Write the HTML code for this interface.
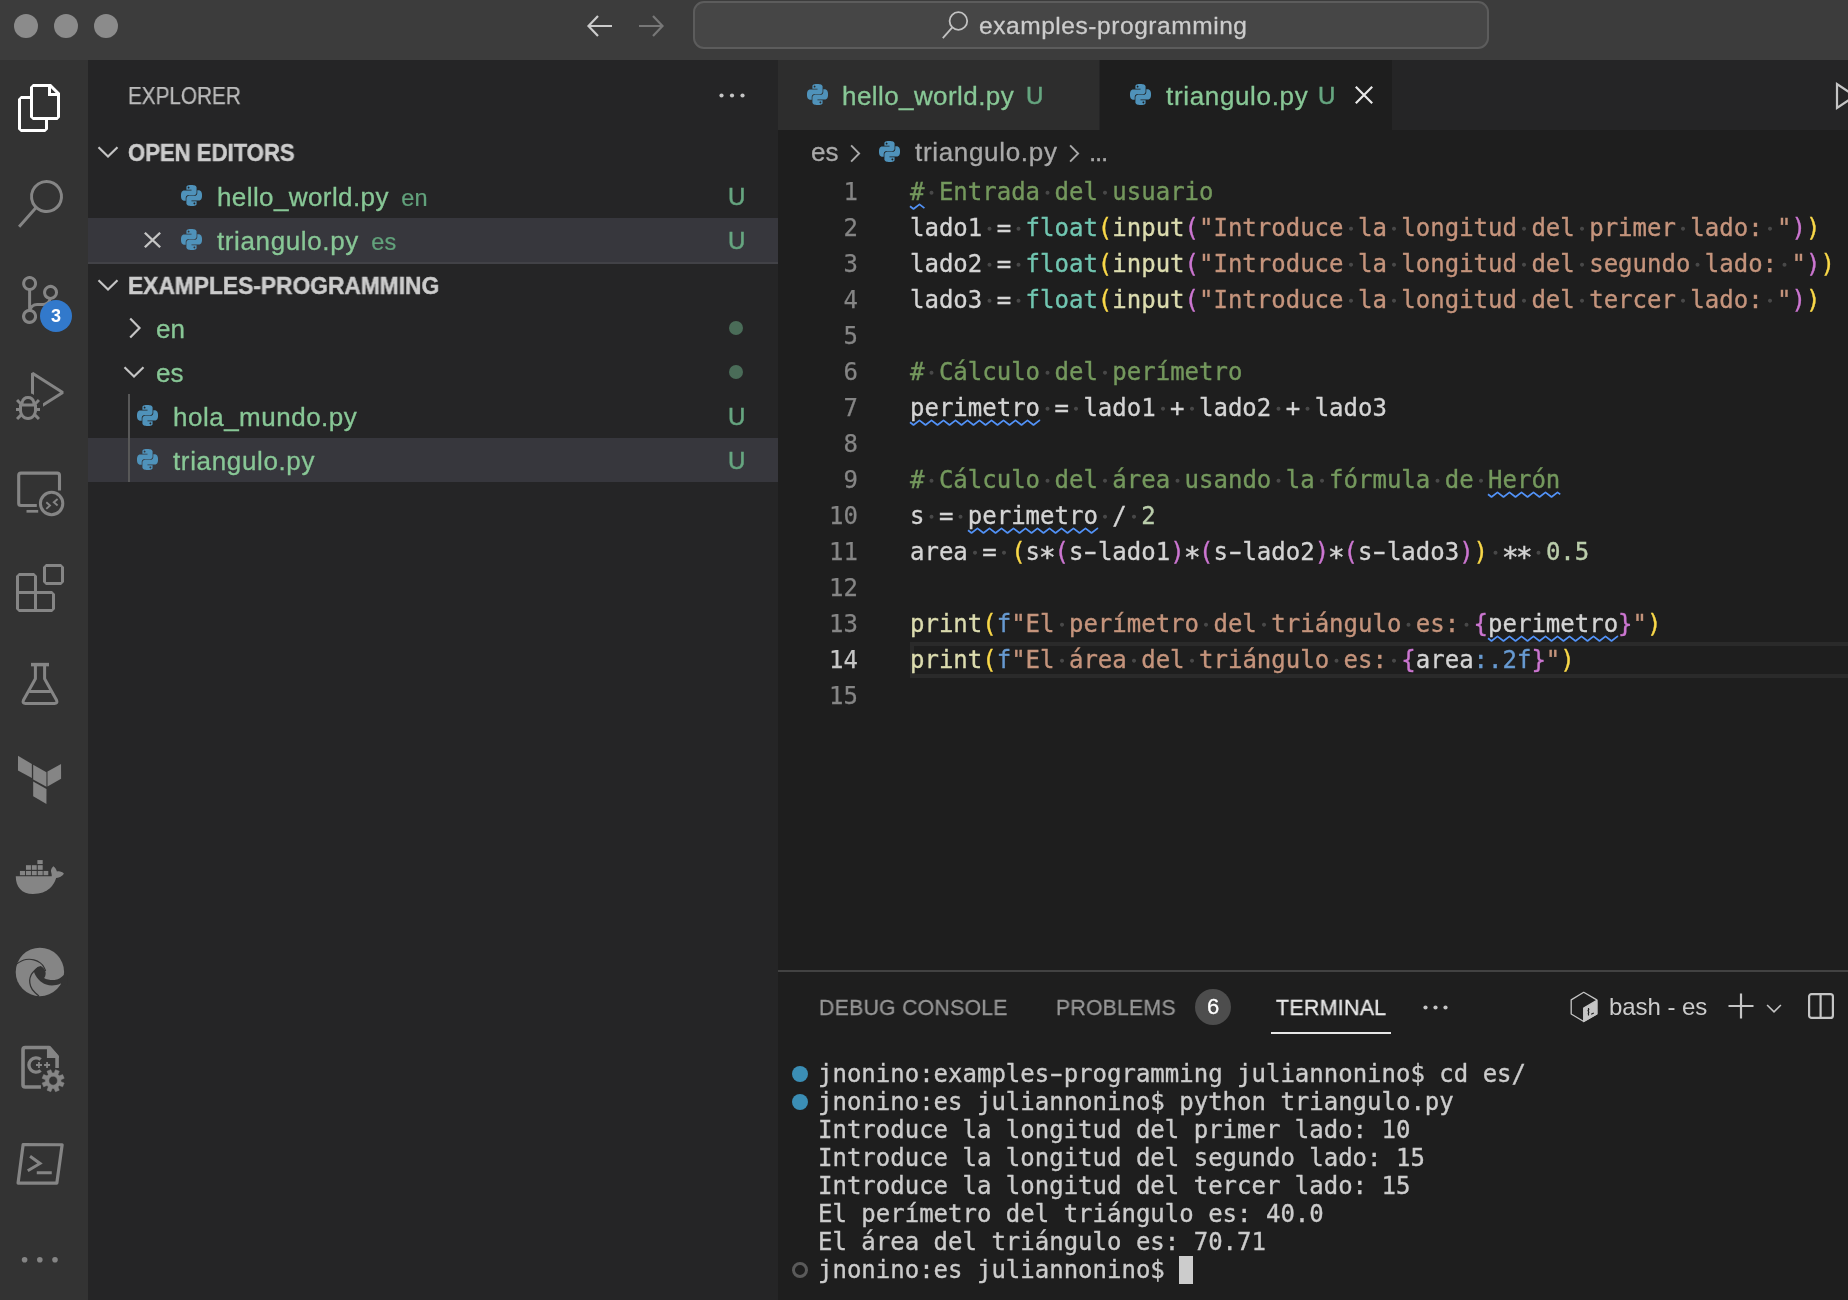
<!DOCTYPE html>
<html lang="es">
<head>
<meta charset="utf-8">
<title>triangulo.py — examples-programming</title>
<style>
*{box-sizing:border-box;margin:0;padding:0}
html,body{width:1848px;height:1300px;overflow:hidden;background:#1e1e1e}
body{position:relative;font-family:"Liberation Sans","DejaVu Sans",sans-serif;color:#cccccc;-webkit-font-smoothing:antialiased}
.abs{position:absolute}
svg{display:block;overflow:visible}
/* title bar */
#titlebar{position:absolute;left:0;top:0;width:1848px;height:60px;background:#3c3c3c}
.tl{position:absolute;top:14px;width:24px;height:24px;border-radius:50%;background:#8b8b8b}
#search{position:absolute;left:693px;top:1px;width:796px;height:48px;border:2px solid #5c5c5c;border-radius:11px;background:#464646}
#search span{position:absolute;left:285px;top:8px;font-size:24.5px;line-height:30px;color:#cccccc;letter-spacing:.35px;white-space:nowrap}
/* activity bar */
#activity{position:absolute;left:0;top:60px;width:88px;height:1240px;background:#333333}
/* sidebar */
#sidebar{position:absolute;left:88px;top:60px;width:690px;height:1240px;background:#252526}
.row{position:absolute;left:0;width:690px;height:44px;white-space:nowrap}
.row.sel{background:#37373d}
.row .lbl{position:absolute;top:7px;font-size:26px;line-height:32px;color:#88c796;letter-spacing:.1px}
.row .desc{font-size:22.5px;color:#62a27c;margin-left:12px;letter-spacing:0}
.row .u{position:absolute;left:640px;top:8px;font-size:24px;line-height:30px;color:#66a680;font-weight:400;-webkit-text-stroke:.5px #66a680}
.hdr{position:absolute;left:40px;font-size:22px;line-height:30px;font-weight:700;color:#cccccc;letter-spacing:.55px;white-space:nowrap}
.dot{position:absolute;left:641px;width:14px;height:14px;border-radius:50%;background:#4a6c58}
/* editor */
#tabs{position:absolute;left:778px;top:60px;width:1070px;height:70px;background:#252526}
.tab{position:absolute;top:0;height:70px;white-space:nowrap}
.tab .t{position:absolute;top:20px;font-size:26px;line-height:32px;color:#88c796;letter-spacing:.1px}
.tab .tu{position:absolute;top:21px;font-size:24px;line-height:30px;color:#66a680;-webkit-text-stroke:.5px #66a680}
#crumbs{position:absolute;left:778px;top:130px;width:1070px;height:44px;white-space:nowrap}
#crumbs span{position:absolute;top:6px;font-size:26px;line-height:32px;color:#a9a9a9}
#code{position:absolute;left:778px;top:174px;width:1070px;height:796px;font-family:"DejaVu Sans Mono","Liberation Mono",monospace;font-size:24px}
.ln{position:absolute;left:0;width:80px;height:36px;text-align:right;color:#858585;line-height:36px;font-size:24px}
.cl{position:absolute;left:132px;height:36px;line-height:36px;white-space:pre;color:#d4d4d4;font-size:24px}
.c{color:#74985d}.s{color:#c5947c}.f{color:#dcdcaf}.t{color:#71c6b1}.n{color:#bacdab}.k{color:#679ad1}.b1{color:#f9d849}.b2{color:#cc76d1}
.w{color:#4a4a4a}
.w{background:radial-gradient(circle at 50% 52.5%,#484848 0,#484848 1.5px,transparent 2.4px)}
.sq{background-repeat:repeat-x;background-position:left bottom;padding-bottom:0}
/* panel */
#panel{position:absolute;left:778px;top:970px;width:1070px;height:330px;border-top:2px solid #424242;background:#1e1e1e}
.pt{position:absolute;top:22px;-webkit-text-stroke:.3px;transform-origin:0 50%;font-size:22px;line-height:28px;color:#969696;letter-spacing:.3px;white-space:nowrap}
#term{position:absolute;left:40px;top:88px;font-family:"DejaVu Sans Mono","Liberation Mono",monospace;font-size:24px;line-height:28px;color:#cccccc;white-space:pre}
.td{position:absolute;left:14px;width:16px;height:16px;border-radius:50%;background:#3b8eb5}
/* grayscale AA: put text in own transparent layers */
.cl,.ln,#term,.lbl,.hdr,.u,.t,.tu,.pt,#crumbs span,#s_txt,#t_explorer,#p_bash{will-change:transform}
.cl,#term{-webkit-text-stroke:.35px}
.ln{-webkit-text-stroke:.25px}
.as{display:inline-block;transform:translateY(5.5px) scale(1.18)}
.hy{display:inline-block;transform:scaleX(1.6)}
.gl{display:block;will-change:transform}
.lbl,.tab .t{-webkit-text-stroke:.3px}
#crumbs span{-webkit-text-stroke:.3px}
.desc{-webkit-text-stroke:.2px}
#t_explorer{-webkit-text-stroke:.25px}
.hdr{-webkit-text-stroke:.45px}
/* fit */
#s_txt{letter-spacing:.56px !important;left:284px !important;-webkit-text-stroke:.3px}
#t_explorer{font-size:23px !important;letter-spacing:0 !important;transform-origin:0 50%;transform:scaleX(.9);top:22px !important;left:40px !important}
#h_open{font-size:23px;letter-spacing:0;transform-origin:0 50%;transform:scaleX(.961);margin-top:1px}
#h_ex{font-size:23px;letter-spacing:0;transform-origin:0 50%;transform:scaleX(.99);margin-top:1px}
#l_hello{letter-spacing:.4px;margin-left:1px}
#l_tri1{letter-spacing:.62px;margin-left:1px}
#l_hola{letter-spacing:.5px !important;margin-left:0.5px}
#l_tri2{letter-spacing:.64px !important;margin-left:1px}
#tab1t{letter-spacing:.42px}
#tab2t{letter-spacing:.66px;margin-left:.6px}
#c_tri{letter-spacing:.68px;margin-left:.6px}
#c_es{margin-left:.5px}
#p_debug{transform:scaleX(.964);margin-left:1px}
#p_prob{transform:scaleX(.961)}
#p_term{transform:scaleX(.972)}
#d_en,#d_es{font-size:23.5px;letter-spacing:.1px;margin-left:12.5px}
</style>
</head>
<body>
<svg width="0" height="0" style="position:absolute"><defs><symbol id="py" viewBox="0 0 24 24"><path fill="#4f92ba" d="M14.25.18l.9.2.73.26.59.3.45.32.34.34.25.34.16.33.1.3.04.26.02.2-.01.13V8.5l-.05.63-.13.55-.21.46-.26.38-.3.31-.33.25-.35.19-.35.14-.33.1-.3.07-.26.04-.21.02H8.77l-.69.05-.59.14-.5.22-.41.27-.33.32-.27.35-.2.36-.15.37-.1.35-.07.32-.04.27-.02.21v3.06H3.17l-.21-.03-.28-.07-.32-.12-.35-.18-.36-.26-.36-.36-.35-.46-.32-.59-.28-.73-.21-.88-.14-1.05-.05-1.23.06-1.22.16-1.04.24-.87.32-.71.36-.57.4-.44.42-.33.42-.24.4-.16.36-.1.32-.05.24-.01h.16l.06.01h8.16v-.83H6.18l-.01-2.75-.02-.37.05-.34.11-.31.17-.28.25-.26.31-.23.38-.2.44-.18.51-.15.58-.12.64-.1.71-.06.77-.04.84-.02 1.27.05zm-6.3 1.98l-.23.33-.08.41.08.41.23.34.33.22.41.09.41-.09.33-.22.23-.34.08-.41-.08-.41-.23-.33-.33-.22-.41-.09-.41.09zm13.09 3.95l.28.06.32.12.35.18.36.27.36.35.35.47.32.59.28.73.21.88.14 1.04.05 1.23-.06 1.23-.16 1.04-.24.86-.32.71-.36.57-.4.45-.42.33-.42.24-.4.16-.36.09-.32.05-.24.02-.16-.01h-8.22v.82h5.84l.01 2.76.02.36-.05.34-.11.31-.17.29-.25.25-.31.24-.38.2-.44.17-.51.15-.58.13-.64.09-.71.07-.77.04-.84.01-1.27-.04-1.07-.14-.9-.2-.73-.25-.59-.3-.45-.33-.34-.34-.25-.34-.16-.33-.1-.3-.04-.25-.02-.2.01-.13v-5.34l.05-.64.13-.54.21-.46.26-.38.3-.32.33-.24.35-.2.35-.14.33-.1.3-.06.26-.04.21-.02.13-.01h5.84l.69-.05.59-.14.5-.21.41-.28.33-.32.27-.35.2-.36.15-.36.1-.35.07-.32.04-.28.02-.21V6.07h2.09l.14.01zm-6.47 14.25l-.23.33-.08.41.08.41.23.33.33.23.41.08.41-.08.33-.23.23-.33.08-.41-.08-.41-.23-.33-.33-.23-.41-.08-.41.08z"/></symbol></defs></svg>
<div id="titlebar">
  <div class="tl" style="left:14px"></div><div class="tl" style="left:54px"></div><div class="tl" style="left:94px"></div>
  <svg class="abs" style="left:587px;top:15px" width="26" height="22" viewBox="0 0 26 22"><path d="M11 1 L1.5 11 L11 21 M1.500 11 H25" fill="none" stroke="#cccccc" stroke-width="2.2"/></svg>
<svg class="abs" style="left:638px;top:15px" width="26" height="22" viewBox="0 0 26 22"><path d="M15 1 L24.5 11 L15 21 M24.5 11 H1" fill="none" stroke="#777777" stroke-width="2.2"/></svg>
<div id="search"><svg class="abs" style="left:247px;top:7.600px" width="27" height="28" viewBox="0 0 27 28"><circle cx="16.400" cy="10" r="8.800" fill="none" stroke="#c2c2c2" stroke-width="1.800"/><path d="M10.300 16.300 L0.800 27.200" stroke="#c2c2c2" stroke-width="1.800" fill="none"/></svg><span id="s_txt">examples-programming</span></div>
</div>
<div id="activity">
<svg class="abs" style="left:16px;top:24px" width="48" height="48" viewBox="0 0 24 24"><path fill="#ffffff" d="M17.5 0h-9L7 1.5V6H2.5L1 7.5v15.07L2.5 24h12.07L16 22.57V18h4.7l1.3-1.43V4.5L17.5 0zm0 2.12l2.38 2.38H17.5V2.12zm-3 20.38h-12v-15H7v9.07L8.5 18h6v4.5zm6-6h-12v-15H16V6h4.5v10.5z"/></svg>
<svg class="abs" style="left:16px;top:120px" width="48" height="48" viewBox="0 0 24 24"><path fill="#858585" d="M15.25 0a8.25 8.25 0 0 0-6.18 13.72L1 22.88l1.12 1 8.05-9.12A8.251 8.251 0 1 0 15.25.01V0zm0 15a6.75 6.75 0 1 1 0-13.5 6.75 6.75 0 0 1 0 13.5z"/></svg>
<svg class="abs" style="left:16px;top:216px" width="48" height="48" viewBox="0 0 24 24"><path fill="#858585" d="M21.007 8.222A3.738 3.738 0 0 0 15.045 5.2a3.737 3.737 0 0 0 1.156 6.583 2.988 2.988 0 0 1-2.668 1.67h-2.99a4.456 4.456 0 0 0-2.989 1.165V7.4a3.737 3.737 0 1 0-1.494 0v9.117a3.776 3.776 0 1 0 1.816.099 2.99 2.99 0 0 1 2.668-1.667h2.99a4.484 4.484 0 0 0 4.223-3.039 3.736 3.736 0 0 0 3.25-3.687zM4.565 3.738a2.242 2.242 0 1 1 4.484 0 2.242 2.242 0 0 1-4.484 0zm4.484 16.441a2.242 2.242 0 1 1-4.484 0 2.242 2.242 0 0 1 4.484 0zm8.221-9.715a2.242 2.242 0 1 1 0-4.485 2.242 2.242 0 0 1 0 4.485z"/></svg>
<div class="abs" style="left:40px;top:240px;width:32px;height:32px;border-radius:50%;background:#3279cb;color:#fff;font-size:18px;font-weight:700;line-height:32px;text-align:center"><span class="gl">3</span></div>
<svg class="abs" style="left:16px;top:312px" width="48" height="48" viewBox="0 0 24 24"><path fill="#858585" d="M10.94 13.5l-1.32 1.32a3.73 3.73 0 0 0-7.24 0L1.06 13.5 0 14.56l1.72 1.72-.22.22V18H0v1.5h1.5v.08c.077.489.214.966.41 1.42L0 22.94 1.06 24l1.65-1.65A4.308 4.308 0 0 0 6 24a4.31 4.31 0 0 0 3.29-1.65L10.94 24 12 22.94 10.09 21c.198-.464.336-.951.41-1.45v-.1H12V18h-1.5v-1.5l-.22-.22L12 14.56l-1.06-1.06zM6 13.5a2.25 2.25 0 0 1 2.25 2.25h-4.5A2.25 2.25 0 0 1 6 13.5zm3 6a3.33 3.33 0 0 1-3 3 3.33 3.33 0 0 1-3-3v-2.25h6v2.25zm14.76-9.9v1.26L13.5 17.37V15.6l8.5-5.37L9 2v9.46a5.07 5.07 0 0 0-1.5-.72V.63L8.64 0l15.12 9.6z"/></svg>
<svg class="abs" style="left:16px;top:504px" width="48" height="48" viewBox="0 0 24 24"><path fill="#858585" d="M13.5 1.5L15 0h7.5L24 1.5V9l-1.5 1.5H15L13.5 9V1.5zm1.5 0V9h7.5V1.5H15zM0 15V6l1.5-1.5H9L10.5 6v7.5H18l1.5 1.5v7.5L18 24H1.5L0 22.5V15zm9-1.5V6H1.5v7.5H9zM9 15H1.5v7.5H9V15zm1.5 7.5H18V15h-7.5v7.5z"/></svg>
<svg class="abs" style="left:20px;top:1195px" width="40" height="8"><circle cx="4.600" cy="4.700" r="2.800" fill="#858585"/><circle cx="19.800" cy="4.700" r="2.800" fill="#858585"/><circle cx="35" cy="4.700" r="2.800" fill="#858585"/></svg>
<path d="M31 604.6 H49" stroke="#858585" stroke-width="3.5" fill="none"/>
<path d="M35.4 606 V618.7 L23.4 640.3 Q22.2 643.4 25.5 643.4 H54.5 Q57.800 643.4 56.6 640.3 L44.6 618.7 V606 M29.5 631.6 H50.5" stroke="#858585" stroke-width="3" fill="none" stroke-linejoin="round"/>
<path d="M17.97 695.87 L31.85 703.90 L31.85 718.08 L17.97 710.48 Z" fill="#858585"/>
<path d="M33.17 704.63 L46.46 712.23 L46.46 726.84 L33.17 719.54 Z" fill="#858585"/>
<path d="M47.49 711.50 L61.08 703.90 L61.08 718.81 L47.49 726.55 Z" fill="#858585"/>
<path d="M33.17 721.44 L46.46 729.04 L46.46 743.94 L33.17 736.34 Z" fill="#858585"/>
<path d="M15.77 816.15 L51.73 816.15 C52.12 814.62 50.77 811.54 50.96 810.38 C51.35 808.46 52.31 806.92 53.46 806.15 C55.38 807.69 56.54 809.62 56.92 811.54 C59.62 810.77 62.31 811.92 63.85 813.46 C63.08 815.38 61.15 816.92 56.15 818.08 C54.23 824.62 48.46 834.04 33.08 834.04 C21.54 834.04 15.77 826.54 15.77 816.15 Z" fill="#858585"/>
<rect x="19.92" y="810.96" width="5.15" height="4.23" fill="#858585"/>
<rect x="25.96" y="810.96" width="5.00" height="4.23" fill="#858585"/>
<rect x="31.85" y="810.96" width="4.88" height="4.23" fill="#858585"/>
<rect x="37.77" y="810.96" width="4.92" height="4.23" fill="#858585"/>
<rect x="43.54" y="810.96" width="4.73" height="4.23" fill="#858585"/>
<rect x="25.96" y="805.19" width="5.00" height="4.62" fill="#858585"/>
<rect x="31.85" y="805.19" width="4.88" height="4.62" fill="#858585"/>
<rect x="37.77" y="805.19" width="4.92" height="4.62" fill="#858585"/>
<rect x="37.38" y="800.08" width="5.31" height="3.96" fill="#858585"/>
<circle cx="39.90" cy="911.95" r="24.2" fill="#858585"/>
<path d="M40.52 905.99 C43.38 907.18 45.77 910.04 45.67 913.38 C45.57 915.77 44.81 917.20 44.10 917.91 C46.72 919.58 51.96 920.53 55.78 919.82 C58.64 919.20 61.03 917.67 63.89 915.05 L67.70 915.05 L67.70 925.78 L60.64 923.49 C55.78 925.78 50.53 926.02 46.24 924.59 C40.52 922.44 35.75 917.67 33.84 911.47 C35.27 908.61 37.66 906.94 40.52 905.99 Z" fill="#333333"/>
<path d="M16.44 904.08 Q21.92 900.27 25.98 899.55 Q30.03 898.84 33.84 899.91 Q37.66 900.98 40.28 902.89 Q42.90 904.80 44.22 907.66 L45.53 910.52" fill="none" stroke="#333333" stroke-width="1.15" stroke-linecap="round"/>
<path d="M38.14 907.42 Q32.89 911.47 31.34 914.57 Q29.79 917.67 29.67 920.30 Q29.55 922.92 30.62 926.26 Q31.70 929.59 35.15 932.69 L38.61 935.79" fill="none" stroke="#333333" stroke-width="1.25" stroke-linecap="round"/>
<path d="M40.92 1027.05 L25.23 1027.05 Q23.01 1027.05 23.01 1024.84 L23.01 989.77 Q23.01 987.55 25.23 987.55 L49.22 987.55 L57.07 996.46 L57.07 1007.99" fill="none" stroke="#858585" stroke-width="3.6" stroke-linejoin="round"/>
<path d="M46.92 986.08 L49.46 986.08 L58.92 996.60 L58.92 998.07 L46.92 998.07 Z" fill="#858585"/>
<path d="M40.67 999.52 A7.15 7.15 0 1 0 40.67 1010.47" fill="none" stroke="#858585" stroke-width="3.4"/>
<path d="M35.98 1005.00 H41.98 M38.98 1002.00 V1007.99" stroke="#858585" stroke-width="1.8" fill="none"/>
<path d="M44.06 1005.00 H50.06 M47.06 1002.00 V1007.99" stroke="#858585" stroke-width="1.8" fill="none"/>
<circle cx="53.15" cy="1020.69" r="11.51" fill="#333333"/>
<path d="M61.30 1021.69 L64.21 1023.04 L62.63 1026.84 L59.62 1025.74 L58.20 1027.16 L59.30 1030.17 L55.50 1031.74 L54.15 1028.84 L52.15 1028.84 L50.80 1031.74 L46.99 1030.17 L48.09 1027.16 L46.67 1025.74 L43.67 1026.84 L42.09 1023.04 L44.99 1021.69 L44.99 1019.68 L42.09 1018.33 L43.67 1014.53 L46.67 1015.63 L48.09 1014.21 L46.99 1011.20 L50.80 1009.63 L52.15 1012.53 L54.15 1012.53 L55.50 1009.63 L59.30 1011.20 L58.20 1014.21 L59.62 1015.63 L62.63 1014.53 L64.21 1018.33 L61.30 1019.68 Z M57.39 1020.69 A4.25 4.25 0 1 0 48.90 1020.69 A4.25 4.25 0 1 0 57.39 1020.69 Z" fill="#858585" fill-rule="evenodd" stroke="#858585" stroke-width="0.800" stroke-linejoin="round"/>
<path d="M23.15 1084.54 L62.15 1084.77 L56.84 1123.07 L18.08 1123.07 Z" fill="none" stroke="#858585" stroke-width="3.2" stroke-linejoin="round"/>
<path d="M30.07 1096.30 L40.00 1103.46 L27.77 1110.84 M36.77 1112.69 L51.76 1112.69" fill="none" stroke="#858585" stroke-width="3"/>
<path d="M36.8 445.5 H21 Q18.700 445.5 18.700 443.2 V415.4 Q18.700 413.1 21 413.1 H57.200 Q59.500 413.1 59.500 415.4 V430.5" fill="none" stroke="#858585" stroke-width="3.1"/>
<path d="M26.500 451.3 H38.200" fill="none" stroke="#858585" stroke-width="2.700"/>
<circle cx="51.600" cy="443.5" r="11.200" fill="none" stroke="#858585" stroke-width="3"/>
<path d="M46.300 442.2 L50 445.5 L46.300 448.9 M57.600 439.1 L53.800 442.3 L57.600 445.5" fill="none" stroke="#858585" stroke-width="1.900"/>
</svg>
<svg class="abs" style="left:0;top:0" width="88" height="1240" viewBox="0 0 88 1240">
<path d="M31 604.6 H49" stroke="#858585" stroke-width="3.5" fill="none"/>
<path d="M35.4 606 V618.7 L23.4 640.3 Q22.2 643.4 25.5 643.4 H54.5 Q57.800 643.4 56.6 640.3 L44.6 618.7 V606 M29.5 631.6 H50.5" stroke="#858585" stroke-width="3" fill="none" stroke-linejoin="round"/>
<path d="M17.97 695.87 L31.85 703.90 L31.85 718.08 L17.97 710.48 Z" fill="#858585"/>
<path d="M33.17 704.63 L46.46 712.23 L46.46 726.84 L33.17 719.54 Z" fill="#858585"/>
<path d="M47.49 711.50 L61.08 703.90 L61.08 718.81 L47.49 726.55 Z" fill="#858585"/>
<path d="M33.17 721.44 L46.46 729.04 L46.46 743.94 L33.17 736.34 Z" fill="#858585"/>
<path d="M15.77 816.15 L51.73 816.15 C52.12 814.62 50.77 811.54 50.96 810.38 C51.35 808.46 52.31 806.92 53.46 806.15 C55.38 807.69 56.54 809.62 56.92 811.54 C59.62 810.77 62.31 811.92 63.85 813.46 C63.08 815.38 61.15 816.92 56.15 818.08 C54.23 824.62 48.46 834.04 33.08 834.04 C21.54 834.04 15.77 826.54 15.77 816.15 Z" fill="#858585"/>
<rect x="19.92" y="810.96" width="5.15" height="4.23" fill="#858585"/>
<rect x="25.96" y="810.96" width="5.00" height="4.23" fill="#858585"/>
<rect x="31.85" y="810.96" width="4.88" height="4.23" fill="#858585"/>
<rect x="37.77" y="810.96" width="4.92" height="4.23" fill="#858585"/>
<rect x="43.54" y="810.96" width="4.73" height="4.23" fill="#858585"/>
<rect x="25.96" y="805.19" width="5.00" height="4.62" fill="#858585"/>
<rect x="31.85" y="805.19" width="4.88" height="4.62" fill="#858585"/>
<rect x="37.77" y="805.19" width="4.92" height="4.62" fill="#858585"/>
<rect x="37.38" y="800.08" width="5.31" height="3.96" fill="#858585"/>
<circle cx="39.90" cy="911.95" r="24.2" fill="#858585"/>
<path d="M40.52 905.99 C43.38 907.18 45.77 910.04 45.67 913.38 C45.57 915.77 44.81 917.20 44.10 917.91 C46.72 919.58 51.96 920.53 55.78 919.82 C58.64 919.20 61.03 917.67 63.89 915.05 L67.70 915.05 L67.70 925.78 L60.64 923.49 C55.78 925.78 50.53 926.02 46.24 924.59 C40.52 922.44 35.75 917.67 33.84 911.47 C35.27 908.61 37.66 906.94 40.52 905.99 Z" fill="#333333"/>
<path d="M16.44 904.08 Q21.92 900.27 25.98 899.55 Q30.03 898.84 33.84 899.91 Q37.66 900.98 40.28 902.89 Q42.90 904.80 44.22 907.66 L45.53 910.52" fill="none" stroke="#333333" stroke-width="1.15" stroke-linecap="round"/>
<path d="M38.14 907.42 Q32.89 911.47 31.34 914.57 Q29.79 917.67 29.67 920.30 Q29.55 922.92 30.62 926.26 Q31.70 929.59 35.15 932.69 L38.61 935.79" fill="none" stroke="#333333" stroke-width="1.25" stroke-linecap="round"/>
<path d="M40.92 1027.05 L25.23 1027.05 Q23.01 1027.05 23.01 1024.84 L23.01 989.77 Q23.01 987.55 25.23 987.55 L49.22 987.55 L57.07 996.46 L57.07 1007.99" fill="none" stroke="#858585" stroke-width="3.6" stroke-linejoin="round"/>
<path d="M46.92 986.08 L49.46 986.08 L58.92 996.60 L58.92 998.07 L46.92 998.07 Z" fill="#858585"/>
<path d="M40.67 999.52 A7.15 7.15 0 1 0 40.67 1010.47" fill="none" stroke="#858585" stroke-width="3.4"/>
<path d="M35.98 1005.00 H41.98 M38.98 1002.00 V1007.99" stroke="#858585" stroke-width="1.8" fill="none"/>
<path d="M44.06 1005.00 H50.06 M47.06 1002.00 V1007.99" stroke="#858585" stroke-width="1.8" fill="none"/>
<circle cx="53.15" cy="1020.69" r="11.51" fill="#333333"/>
<path d="M60.93 1021.64 L64.21 1023.04 L62.63 1026.84 L59.33 1025.52 L57.98 1026.87 L59.30 1030.17 L55.50 1031.74 L54.10 1028.47 L52.19 1028.47 L50.80 1031.74 L46.99 1030.17 L48.32 1026.87 L46.97 1025.52 L43.67 1026.84 L42.09 1023.04 L45.36 1021.64 L45.36 1019.73 L42.09 1018.33 L43.67 1014.53 L46.97 1015.86 L48.32 1014.50 L46.99 1011.20 L50.80 1009.63 L52.19 1012.90 L54.10 1012.90 L55.50 1009.63 L59.30 1011.20 L57.98 1014.50 L59.33 1015.86 L62.63 1014.53 L64.21 1018.33 L60.93 1019.73 Z M57.39 1020.69 A4.25 4.25 0 1 0 48.90 1020.69 A4.25 4.25 0 1 0 57.39 1020.69 Z" fill="#858585" fill-rule="evenodd" stroke="#858585" stroke-width="0.500" stroke-linejoin="round"/>
<path d="M23.15 1084.54 L62.15 1084.77 L56.84 1123.07 L18.08 1123.07 Z" fill="none" stroke="#858585" stroke-width="3.2" stroke-linejoin="round"/>
<path d="M30.07 1096.30 L40.00 1103.46 L27.77 1110.84 M36.77 1112.69 L51.76 1112.69" fill="none" stroke="#858585" stroke-width="3"/>
<path d="M36.8 445.5 H21 Q18.700 445.5 18.700 443.2 V415.4 Q18.700 413.1 21 413.1 H57.200 Q59.500 413.1 59.500 415.4 V430.5" fill="none" stroke="#858585" stroke-width="3.1"/>
<path d="M26.500 451.3 H38.200" fill="none" stroke="#858585" stroke-width="2.700"/>
<circle cx="51.600" cy="443.5" r="11.200" fill="none" stroke="#858585" stroke-width="3"/>
<path d="M46.300 442.2 L50 445.5 L46.300 448.9 M57.600 439.1 L53.800 442.3 L57.600 445.5" fill="none" stroke="#858585" stroke-width="1.900"/>
</svg>
</div>
<div id="sidebar">
<div class="abs" style="left:40px;top:21px;font-size:22px;line-height:28px;color:#bbbbbb;letter-spacing:.3px;white-space:nowrap" id="t_explorer">EXPLORER</div>
<svg class="abs" style="left:631px;top:33px" width="26" height="5"><circle cx="2.5" cy="2.5" r="2.1" fill="#c5c5c5"/><circle cx="13" cy="2.5" r="2.1" fill="#c5c5c5"/><circle cx="23.5" cy="2.5" r="2.1" fill="#c5c5c5"/></svg>
<svg class="abs" style="left:9px;top:86px" width="22" height="12" viewBox="0 0 22 12"><path d="M1.5 1.2 L11 10.5 L20.5 1.2" fill="none" stroke="#c5c5c5" stroke-width="2.2"/></svg>
<div class="hdr" id="h_open" style="top:77px">OPEN EDITORS</div>
<div class="row" style="top:114px"><svg class="abs" style="left:93px;top:11px" width="21" height="21"><use href="#py"/></svg><span class="lbl" style="left:128px"><span id="l_hello">hello_world.py</span><span class="desc" id="d_en">en</span></span><span class="u">U</span></div>
<div class="row sel" style="top:158px"><svg class="abs" style="left:55.500px;top:14.400px" width="17" height="16" viewBox="0 0 16 16" preserveAspectRatio="none"><path d="M0.8 0.8 L15.2 15.2 M15.2 0.8 L0.8 15.2" fill="none" stroke="#c5c5c5" stroke-width="2.2"/></svg><svg class="abs" style="left:93px;top:11px" width="21" height="21"><use href="#py"/></svg><span class="lbl" style="left:128px"><span id="l_tri1">triangulo.py</span><span class="desc" id="d_es">es</span></span><span class="u">U</span></div>
<div class="abs" style="left:0;top:202px;width:690px;height:2px;background:#424247"></div>
<svg class="abs" style="left:9px;top:219px" width="22" height="12" viewBox="0 0 22 12"><path d="M1.5 1.2 L11 10.5 L20.5 1.2" fill="none" stroke="#c5c5c5" stroke-width="2.2"/></svg>
<div class="hdr" id="h_ex" style="top:210px">EXAMPLES-PROGRAMMING</div>
<div class="row" style="top:246px"><svg class="abs" style="left:41px;top:11px" width="12" height="22" viewBox="0 0 12 22"><path d="M1.2 1.5 L10.5 11 L1.2 20.5" fill="none" stroke="#c5c5c5" stroke-width="2.2"/></svg><span class="lbl" id="l_en" style="left:68px">en</span><span class="dot" style="top:15px"></span></div>
<div class="row" style="top:290px"><svg class="abs" style="left:35px;top:16px" width="22" height="12" viewBox="0 0 22 12"><path d="M1.5 1.2 L11 10.5 L20.5 1.2" fill="none" stroke="#c5c5c5" stroke-width="2.2"/></svg><span class="lbl" id="l_es" style="left:68px">es</span><span class="dot" style="top:15px"></span></div>
<div class="row" style="top:334px"><svg class="abs" style="left:49px;top:11px" width="21" height="21"><use href="#py"/></svg><span class="lbl" id="l_hola" style="left:84px">hola_mundo.py</span><span class="u">U</span></div>
<div class="row sel" style="top:378px"><svg class="abs" style="left:49px;top:11px" width="21" height="21"><use href="#py"/></svg><span class="lbl" id="l_tri2" style="left:84px">triangulo.py</span><span class="u">U</span></div>
<div class="abs" style="left:40px;top:334px;width:2px;height:88px;background:#585858"></div>
</div>
<div id="tabs">
<div class="tab" style="left:0;width:321px;background:#2d2d2d"><svg class="abs" style="left:29px;top:24px" width="21" height="21"><use href="#py"/></svg><span class="t" id="tab1t" style="left:64px">hello_world.py</span><span class="tu" style="left:248px">U</span></div>
<div class="tab" style="left:322px;width:292px;background:#1e1e1e"><svg class="abs" style="left:30px;top:24px" width="21" height="21"><use href="#py"/></svg><span class="t" id="tab2t" style="left:65px">triangulo.py</span><span class="tu" style="left:218px">U</span><svg class="abs" style="left:255.0px;top:26.0px" width="18" height="18" viewBox="0 0 18 18"><path d="M0.8 0.8 L17.2 17.2 M17.2 0.8 L0.8 17.2" fill="none" stroke="#e8e8e8" stroke-width="2.2"/></svg></div>
<svg class="abs" style="left:1057px;top:22px" width="13" height="28" viewBox="0 0 13 28"><path d="M2 2 L2 26 L20 14 Z" fill="none" stroke="#c5c5c5" stroke-width="2.2"/></svg>
</div>
<div id="crumbs">
<span id="c_es" style="left:32px">es</span>
<svg class="abs" style="left:72px;top:14px" width="10.5" height="19" viewBox="0 0 12 22"><path d="M1.2 1.5 L10.5 11 L1.2 20.5" fill="none" stroke="#a9a9a9" stroke-width="2.2"/></svg>
<svg class="abs" style="left:101px;top:11px" width="21" height="21"><use href="#py"/></svg>
<span id="c_tri" style="left:136px">triangulo.py</span>
<svg class="abs" style="left:291px;top:14px" width="10.5" height="19" viewBox="0 0 12 22"><path d="M1.2 1.5 L10.5 11 L1.2 20.5" fill="none" stroke="#a9a9a9" stroke-width="2.2"/></svg>
<span id="c_dots" style="left:311px;letter-spacing:-1.2px">...</span>
</div>
<div id="code">
<div class="abs" style="left:132px;top:468px;width:960px;height:36px;border:4px solid #2a2a2a"></div>
<div class="ln" style="top:0px">1</div><div class="cl" style="top:0px"><span class="c">#<span class="w"> </span>Entrada<span class="w"> </span>del<span class="w"> </span>usuario</span></div>
<div class="ln" style="top:36px">2</div><div class="cl" style="top:36px">lado1<span class="w"> </span>=<span class="w"> </span><span class="t">float</span><span class="b1">(</span><span class="f">input</span><span class="b2">(</span><span class="s">"Introduce<span class="w"> </span>la<span class="w"> </span>longitud<span class="w"> </span>del<span class="w"> </span>primer<span class="w"> </span>lado:<span class="w"> </span>"</span><span class="b2">)</span><span class="b1">)</span></div>
<div class="ln" style="top:72px">3</div><div class="cl" style="top:72px">lado2<span class="w"> </span>=<span class="w"> </span><span class="t">float</span><span class="b1">(</span><span class="f">input</span><span class="b2">(</span><span class="s">"Introduce<span class="w"> </span>la<span class="w"> </span>longitud<span class="w"> </span>del<span class="w"> </span>segundo<span class="w"> </span>lado:<span class="w"> </span>"</span><span class="b2">)</span><span class="b1">)</span></div>
<div class="ln" style="top:108px">4</div><div class="cl" style="top:108px">lado3<span class="w"> </span>=<span class="w"> </span><span class="t">float</span><span class="b1">(</span><span class="f">input</span><span class="b2">(</span><span class="s">"Introduce<span class="w"> </span>la<span class="w"> </span>longitud<span class="w"> </span>del<span class="w"> </span>tercer<span class="w"> </span>lado:<span class="w"> </span>"</span><span class="b2">)</span><span class="b1">)</span></div>
<div class="ln" style="top:144px">5</div><div class="cl" style="top:144px"></div>
<div class="ln" style="top:180px">6</div><div class="cl" style="top:180px"><span class="c">#<span class="w"> </span>Cálculo<span class="w"> </span>del<span class="w"> </span>perímetro</span></div>
<div class="ln" style="top:216px">7</div><div class="cl" style="top:216px">perimetro<span class="w"> </span>=<span class="w"> </span>lado1<span class="w"> </span>+<span class="w"> </span>lado2<span class="w"> </span>+<span class="w"> </span>lado3</div>
<div class="ln" style="top:252px">8</div><div class="cl" style="top:252px"></div>
<div class="ln" style="top:288px">9</div><div class="cl" style="top:288px"><span class="c">#<span class="w"> </span>Cálculo<span class="w"> </span>del<span class="w"> </span>área<span class="w"> </span>usando<span class="w"> </span>la<span class="w"> </span>fórmula<span class="w"> </span>de<span class="w"> </span>Herón</span></div>
<div class="ln" style="top:324px">10</div><div class="cl" style="top:324px">s<span class="w"> </span>=<span class="w"> </span>perimetro<span class="w"> </span>/<span class="w"> </span><span class="n">2</span></div>
<div class="ln" style="top:360px">11</div><div class="cl" style="top:360px">area<span class="w"> </span>=<span class="w"> </span><span class="b1">(</span>s<span class="as">*</span><span class="b2">(</span>s<span class="hy">-</span>lado1<span class="b2">)</span><span class="as">*</span><span class="b2">(</span>s<span class="hy">-</span>lado2<span class="b2">)</span><span class="as">*</span><span class="b2">(</span>s<span class="hy">-</span>lado3<span class="b2">)</span><span class="b1">)</span><span class="w"> </span><span class="as">*</span><span class="as">*</span><span class="w"> </span><span class="n">0.5</span></div>
<div class="ln" style="top:396px">12</div><div class="cl" style="top:396px"></div>
<div class="ln" style="top:432px">13</div><div class="cl" style="top:432px"><span class="f">print</span><span class="b1">(</span><span class="k">f</span><span class="s">"El<span class="w"> </span>perímetro<span class="w"> </span>del<span class="w"> </span>triángulo<span class="w"> </span>es:<span class="w"> </span></span><span class="b2">{</span>perimetro<span class="b2">}</span><span class="s">"</span><span class="b1">)</span></div>
<div class="ln" style="top:468px;color:#c6c6c6">14</div><div class="cl" style="top:468px"><span class="f">print</span><span class="b1">(</span><span class="k">f</span><span class="s">"El<span class="w"> </span>área<span class="w"> </span>del<span class="w"> </span>triángulo<span class="w"> </span>es:<span class="w"> </span></span><span class="b2">{</span>area<span class="k">:.2f</span><span class="b2">}</span><span class="s">"</span><span class="b1">)</span></div>
<div class="ln" style="top:504px">15</div><div class="cl" style="top:504px"></div>
<svg class="abs" style="left:132.00px;top:29px" width="14.45" height="7" viewBox="0 0 14.45 7"><path d="M0.00 3.26 L3.50 6.00 L9.50 1.30 L14.45 5.18" fill="none" stroke="#5292f7" stroke-width="1.7" stroke-linejoin="round"/></svg>
<svg class="abs" style="left:132.00px;top:245px" width="130.05" height="7" viewBox="0 0 130.05 7"><path d="M0.00 3.26 L3.50 6.00 L9.50 1.30 L15.50 6.00 L21.50 1.30 L27.50 6.00 L33.50 1.30 L39.50 6.00 L45.50 1.30 L51.50 6.00 L57.50 1.30 L63.50 6.00 L69.50 1.30 L75.50 6.00 L81.50 1.30 L87.50 6.00 L93.50 1.30 L99.50 6.00 L105.50 1.30 L111.50 6.00 L117.50 1.30 L123.50 6.00 L129.50 1.30 L130.05 1.73" fill="none" stroke="#5292f7" stroke-width="1.7" stroke-linejoin="round"/></svg>
<svg class="abs" style="left:710.00px;top:317px" width="72.25" height="7" viewBox="0 0 72.25 7"><path d="M0.00 3.26 L3.50 6.00 L9.50 1.30 L15.50 6.00 L21.50 1.30 L27.50 6.00 L33.50 1.30 L39.50 6.00 L45.50 1.30 L51.50 6.00 L57.50 1.30 L63.50 6.00 L69.50 1.30 L72.25 3.45" fill="none" stroke="#5292f7" stroke-width="1.7" stroke-linejoin="round"/></svg>
<svg class="abs" style="left:189.80px;top:353px" width="130.05" height="7" viewBox="0 0 130.05 7"><path d="M0.00 3.26 L3.50 6.00 L9.50 1.30 L15.50 6.00 L21.50 1.30 L27.50 6.00 L33.50 1.30 L39.50 6.00 L45.50 1.30 L51.50 6.00 L57.50 1.30 L63.50 6.00 L69.50 1.30 L75.50 6.00 L81.50 1.30 L87.50 6.00 L93.50 1.30 L99.50 6.00 L105.50 1.30 L111.50 6.00 L117.50 1.30 L123.50 6.00 L129.50 1.30 L130.05 1.73" fill="none" stroke="#5292f7" stroke-width="1.7" stroke-linejoin="round"/></svg>
<svg class="abs" style="left:710.00px;top:461px" width="130.05" height="7" viewBox="0 0 130.05 7"><path d="M0.00 3.26 L3.50 6.00 L9.50 1.30 L15.50 6.00 L21.50 1.30 L27.50 6.00 L33.50 1.30 L39.50 6.00 L45.50 1.30 L51.50 6.00 L57.50 1.30 L63.50 6.00 L69.50 1.30 L75.50 6.00 L81.50 1.30 L87.50 6.00 L93.50 1.30 L99.50 6.00 L105.50 1.30 L111.50 6.00 L117.50 1.30 L123.50 6.00 L129.50 1.30 L130.05 1.73" fill="none" stroke="#5292f7" stroke-width="1.7" stroke-linejoin="round"/></svg>
</div>
<div id="panel">
<span class="pt" id="p_debug" style="left:40px">DEBUG CONSOLE</span>
<span class="pt" id="p_prob" style="left:278px">PROBLEMS</span>
<div class="abs" style="left:417px;top:17px;width:36px;height:36px;border-radius:50%;background:#4d4d4d;color:#fff;font-size:22px;line-height:36px;text-align:center;-webkit-text-stroke:.3px"><span class="gl">6</span></div>
<span class="pt" id="p_term" style="left:498px;color:#e7e7e7">TERMINAL</span>
<div class="abs" style="left:493px;top:60px;width:120px;height:2px;background:#e7e7e7"></div>
<svg class="abs" style="left:644.500px;top:32.500px" width="26" height="5"><circle cx="2.5" cy="2.5" r="2.1" fill="#c5c5c5"/><circle cx="12.500" cy="2.5" r="2.1" fill="#c5c5c5"/><circle cx="22.500" cy="2.5" r="2.1" fill="#c5c5c5"/></svg>
<svg class="abs" style="left:0;top:0" width="1070" height="60"><path d="M805.7 20.3 L818.8 27.9 L818.8 42.0 L805.7 49.5 L793.2 42.0 L793.2 27.9 Z" fill="none" stroke="#c5c5c5" stroke-width="1.3" stroke-linejoin="round"/><path d="M805.7 36.0 L818.8 28.4 L818.8 42.0 L805.7 49.5 Z" fill="#c5c5c5" stroke="#c5c5c5" stroke-width="1.3" stroke-linejoin="round"/><path d="M811.3 37.2 q-2 .9 -.9 2.2 q1.200 1.300 -.8 2.500 M810.5 36.0 v7.6 M813.2 42.2 l2.600 -1.200" fill="none" stroke="#1e1e1e" stroke-width="1.1"/></svg>
<span class="abs" style="left:830.500px;top:20px;font-size:24px;line-height:30px;color:#cccccc;letter-spacing:-.05px;white-space:nowrap" id="p_bash">bash - es</span>
<svg class="abs" style="left:950px;top:21px" width="26" height="26" viewBox="0 0 26 26"><path d="M13 0.5 V25.5 M0.5 13 H25.5" stroke="#c5c5c5" stroke-width="2.2" fill="none"/></svg>
<svg class="abs" style="left:988px;top:31.500px" width="16" height="9" viewBox="0 0 22 12"><path d="M1.5 1.2 L11 10.5 L20.5 1.2" fill="none" stroke="#c5c5c5" stroke-width="2.2"/></svg>
<svg class="abs" style="left:1030px;top:21px" width="26" height="26" viewBox="0 0 26 26"><rect x="1.1" y="1.1" width="23.8" height="23.8" rx="2.5" fill="none" stroke="#c5c5c5" stroke-width="2.2"/><path d="M12.600 1 V25" stroke="#c5c5c5" stroke-width="2.2"/></svg>
<div id="term">jnonino:examples<span class="hy">-</span>programming juliannonino$ cd es/
jnonino:es juliannonino$ python triangulo.py
Introduce la longitud del primer lado: 10
Introduce la longitud del segundo lado: 15
Introduce la longitud del tercer lado: 15
El perímetro del triángulo es: 40.0
El área del triángulo es: 70.71
jnonino:es juliannonino$ </div>
<div class="td" style="top:94px"></div><div class="td" style="top:122px"></div>
<div class="abs" style="left:14px;top:290px;width:16px;height:16px;border-radius:50%;border:3px solid #5a5a5a"></div>
<div class="abs" style="left:401px;top:284px;width:14px;height:28px;background:#cccccc"></div>
</div>
</body>
</html>
